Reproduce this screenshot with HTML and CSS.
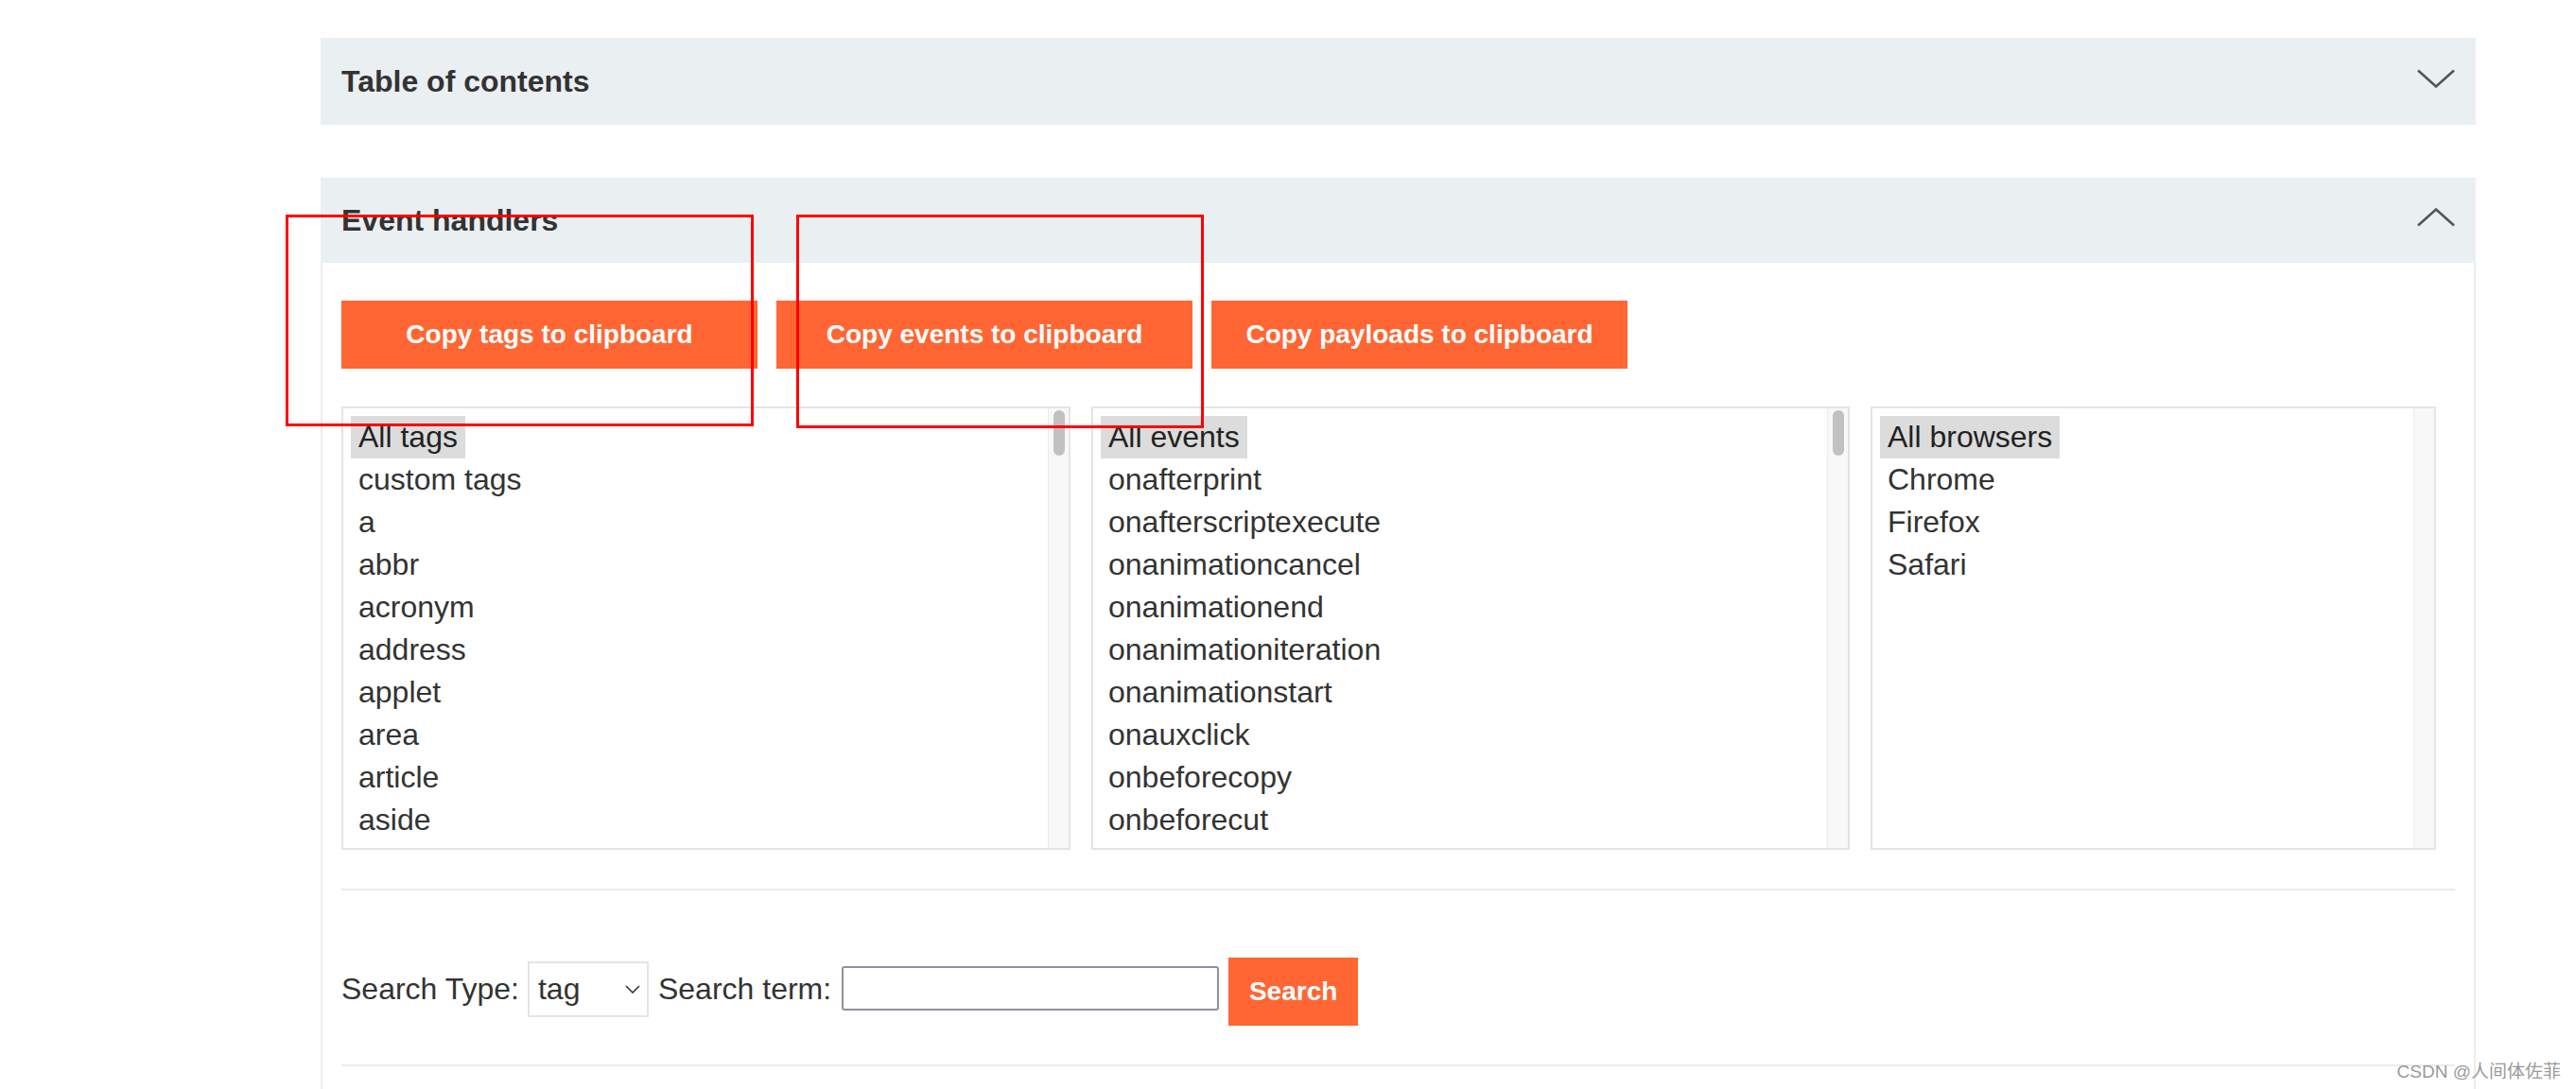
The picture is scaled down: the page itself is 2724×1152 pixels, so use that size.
FILE: index.html
```html
<!DOCTYPE html>
<html lang="en">
<head>
<meta charset="utf-8">
<title>Event handlers</title>
<link rel="stylesheet" href="styles.css">
</head>
<body>
<div class="page">
  <section class="panel panel-toc">
    <div class="panel-head">
      <h2 class="panel-title">Table of contents</h2>
      <svg class="chevron" width="40" height="20" viewBox="0 0 40 20"><polyline points="1,1.5 20,18.5 39,1.5" fill="none" stroke="#555" stroke-width="2.6"/></svg>
    </div>
  </section>

  <section class="panel panel-open">
    <div class="panel-head panel-head-open">
      <h2 class="panel-title">Event handlers</h2>
      <svg class="chevron" width="40" height="20" viewBox="0 0 40 20"><polyline points="1,18.5 20,1.5 39,18.5" fill="none" stroke="#555" stroke-width="2.6"/></svg>
    </div>
    <div class="panel-body">
      <div class="copy-row">
        <button class="btn btn-copy" type="button">Copy tags to clipboard</button>
        <button class="btn btn-copy" type="button">Copy events to clipboard</button>
        <button class="btn btn-copy" type="button">Copy payloads to clipboard</button>
      </div>

      <div class="lists">
        <div class="listbox">
          <div class="listbox-items">
            <div class="opt"><span class="opt-label selected">All tags</span></div>
            <div class="opt"><span class="opt-label">custom tags</span></div>
            <div class="opt"><span class="opt-label">a</span></div>
            <div class="opt"><span class="opt-label">abbr</span></div>
            <div class="opt"><span class="opt-label">acronym</span></div>
            <div class="opt"><span class="opt-label">address</span></div>
            <div class="opt"><span class="opt-label">applet</span></div>
            <div class="opt"><span class="opt-label">area</span></div>
            <div class="opt"><span class="opt-label">article</span></div>
            <div class="opt"><span class="opt-label">aside</span></div>
          </div>
          <div class="track"><div class="thumb"></div></div>
        </div>
        <div class="listbox">
          <div class="listbox-items">
            <div class="opt"><span class="opt-label selected">All events</span></div>
            <div class="opt"><span class="opt-label">onafterprint</span></div>
            <div class="opt"><span class="opt-label">onafterscriptexecute</span></div>
            <div class="opt"><span class="opt-label">onanimationcancel</span></div>
            <div class="opt"><span class="opt-label">onanimationend</span></div>
            <div class="opt"><span class="opt-label">onanimationiteration</span></div>
            <div class="opt"><span class="opt-label">onanimationstart</span></div>
            <div class="opt"><span class="opt-label">onauxclick</span></div>
            <div class="opt"><span class="opt-label">onbeforecopy</span></div>
            <div class="opt"><span class="opt-label">onbeforecut</span></div>
          </div>
          <div class="track"><div class="thumb"></div></div>
        </div>
        <div class="listbox">
          <div class="listbox-items">
            <div class="opt"><span class="opt-label selected">All browsers</span></div>
            <div class="opt"><span class="opt-label">Chrome</span></div>
            <div class="opt"><span class="opt-label">Firefox</span></div>
            <div class="opt"><span class="opt-label">Safari</span></div>
          </div>
          <div class="track"></div>
        </div>
      </div>

      <hr class="divider divider-top">

      <form class="search-row">
        <span class="search-label">Search Type:</span>
        <div class="fake-select">
          <span>tag</span>
          <svg class="select-caret" width="16" height="9" viewBox="0 0 16 9"><polyline points="1,1 8,8 15,1" fill="none" stroke="#333" stroke-width="1.6"/></svg>
        </div>
        <span class="search-label">Search term:</span>
        <input class="search-input" type="text">
        <button class="btn btn-search" type="button">Search</button>
      </form>

      <hr class="divider divider-bottom">
    </div>
  </section>
</div>

<div class="annot annot-tags"></div>
<div class="annot annot-events"></div>
<div class="watermark">CSDN @人间体佐菲</div>
</body>
</html>
```

FILE: styles.css
```css
html, body {
  margin: 0;
  padding: 0;
  background: #ffffff;
}

body {
  font-family: "Liberation Sans", Arial, "Noto Sans CJK SC", sans-serif;
  color: #333333;
  overflow: hidden;
  height: 1152px;
  position: relative;
}

.page {
  padding-top: 40px;
  margin-left: 339px;
  width: 2279px;
}

.panel-toc {
  margin-bottom: 56px;
}

.panel-head {
  display: flex;
  align-items: center;
  justify-content: space-between;
  height: 92px;
  padding: 0 22px;
  background: #eaeff2;
  box-sizing: border-box;
}

.panel-head-open {
  height: 90px;
}

.panel-title {
  margin: 0;
  font-size: 32px;
  font-weight: bold;
  color: #333333;
}

.chevron {
  display: block;
  margin-bottom: 6px;
}

.panel-body {
  border-left: 2px solid #e8edf0;
  border-right: 2px solid #e8edf0;
  padding: 40px 20px 40px 20px;
}

.copy-row {
  display: flex;
  gap: 20px;
  margin-bottom: 40px;
}

.btn {
  border: 0;
  margin: 0;
  background: #ff6633;
  color: #ffffff;
  font-family: "Liberation Sans", Arial, sans-serif;
  font-weight: bold;
  font-size: 28px;
  height: 72px;
  padding: 0;
  cursor: pointer;
}

.btn-copy {
  width: 440px;
}

.btn-search {
  width: 137px;
}

.lists {
  display: grid;
  grid-template-columns: 771px 802px 598px;
  gap: 22px;
}

.listbox {
  display: flex;
  height: 469px;
  border: 2px solid #e4e4e4;
  box-sizing: border-box;
  background: #ffffff;
  overflow: hidden;
}

.listbox-items {
  flex: 1;
  padding: 8px 8px 0 8px;
  overflow: hidden;
}

.opt {
  height: 45px;
  line-height: 45px;
  font-size: 32px;
  white-space: nowrap;
}

.opt-label {
  display: inline-block;
  padding: 0 8px;
  color: #333333;
}

.opt-label.selected {
  background: #dcdcdc;
  color: #222222;
}

.track {
  width: 21px;
  flex: 0 0 21px;
  background: #f8f8f8;
  border-left: 1px solid #ebebeb;
  display: flex;
  justify-content: center;
}

.thumb {
  width: 12px;
  height: 48px;
  margin-top: 2px;
  border-radius: 6px;
  background: #c1c1c1;
}

.divider {
  border: 0;
  height: 2px;
  background: #e8edf0;
  margin: 0;
}

.divider-top {
  margin-top: 41px;
}

.divider-bottom {
  margin-top: 41px;
}

.search-row {
  display: flex;
  align-items: flex-start;
  height: 72px;
  margin: 71px 0 0 0;
  font-size: 32px;
}

.search-label {
  line-height: 59px;
  margin-top: 4px;
  margin-right: 9px;
  white-space: nowrap;
}

.fake-select {
  display: flex;
  align-items: center;
  justify-content: space-between;
  width: 128px;
  height: 59px;
  margin-top: 4px;
  margin-right: 10px;
  padding: 0 7px 0 9px;
  border: 2px solid #e4e4e4;
  box-sizing: border-box;
  background: #ffffff;
}

.select-caret {
  display: block;
}

.search-input {
  width: 399px;
  height: 47px;
  margin: 9px 10px 0 2px;
  border: 2px solid #8f8f9d;
  border-radius: 3px;
  box-sizing: border-box;
  padding: 0 8px;
  font-size: 28px;
  background: #ffffff;
}

.annot {
  position: absolute;
  border: 3px solid #ff0000;
  box-sizing: border-box;
}

.annot-tags {
  left: 302px;
  top: 227px;
  width: 495px;
  height: 224px;
}

.annot-events {
  left: 842px;
  top: 227px;
  width: 431px;
  height: 226px;
}

.watermark {
  position: absolute;
  right: 16px;
  bottom: 7px;
  font-size: 19px;
  color: #9a9a9a;
  font-family: "Liberation Sans", Arial, "Noto Sans CJK SC", sans-serif;
  white-space: nowrap;
}
```
